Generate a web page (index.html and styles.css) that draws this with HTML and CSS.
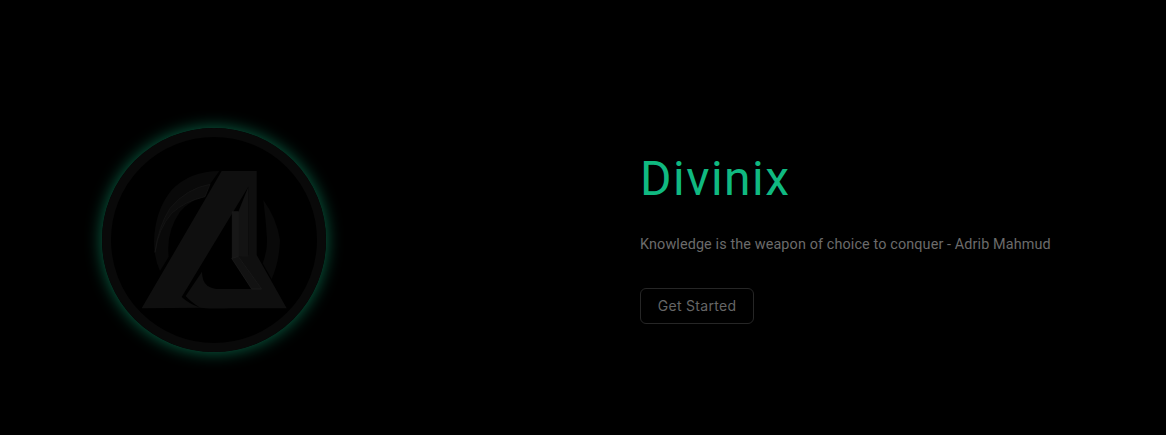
FILE: index.html
```html
<!DOCTYPE html>
<html lang="en">
<head>
    <meta charset="UTF-8">
    <meta name="viewport" content="width=device-width, initial-scale=1.0">
    <title>Divinix</title>
    <link rel="stylesheet" href="styles.css">
</head>
<body>
    <section class="hero">
        <div class="hero-logo">
            <div class="logo-ring">
                <svg class="logo-mark" viewBox="63 66 618 618" aria-hidden="true">
                    <!-- swooshes behind the A -->
                    <path fill="#090909" d="M388 168 Q300 168 245 225 Q195 285 192 380 Q192 430 210 468 L236 425 Q228 350 270 290 Q295 262 330 250 L388 168 Z"/>
                    <path fill="#0d0d0d" stroke="#171717" stroke-width="2" d="M360 208 Q290 220 240 280 Q205 335 195 412 Q205 340 245 295 Q285 258 345 245 Z"/>
                    <path fill="#090909" d="M520 255 Q560 310 570 375 Q568 440 545 492 L518 445 Q535 400 530 360 Q528 320 520 255 Z"/>
                    <!-- A body -->
                    <path fill="#0f0f0f" d="M155 580 L395 168 H500 V420 L590 580 H420 Q370 582 330 578 Z"/>
                    <path fill="#000" d="M475 215 L275 546 Q296 566 330 578 Q302 560 287 543 L336 470 Q336 500 352 512 Q368 522 388 522 H515 L445 425 L475 420 Z"/>
                    <!-- facets -->
                    <path fill="#131313" d="M475 215 V425 L445 425 V290 Z"/>
                    <path fill="#171717" stroke="#1e1e1e" stroke-width="2" d="M427 290 H445 V425 L427 430 Z"/>
                    <path fill="#121212" stroke="#1e1e1e" stroke-width="2" d="M425 430 L445 425 L515 522 H485 Z"/>
                </svg>
            </div>
        </div>
        <div class="hero-text">
            <h1>Divinix</h1>
            <p>Knowledge is the weapon of choice to conquer - Adrib Mahmud</p>
            <button class="start-btn">Get Started</button>
        </div>
    </section>
</body>
</html>
```

FILE: styles.css
```css
body {
    margin: 0;
    background-color: #000;
    font-family: "Roboto", "Liberation Sans", sans-serif;
}
.hero {
    display: grid;
    grid-template-columns: 640px 1fr;
    align-items: start;
    height: 435px;
    box-sizing: border-box;
    padding-top: 128px;
}
.hero-logo {
    padding-left: 102px;
}
.logo-ring {
    width: 224px;
    height: 224px;
    box-sizing: border-box;
    border: 9px solid #090909;
    border-radius: 50%;
    box-shadow: 0 0 16px 1px rgba(16, 185, 129, 0.5);
}
.logo-mark {
    display: block;
    width: 206px;
    height: 206px;
}
.hero-text {
    padding-top: 22px;
}
.hero-text h1 {
    margin: 0 0 25px;
    color: #10b981;
    font-size: 48px;
    font-weight: 400;
    letter-spacing: 1.5px;
    line-height: 58px;
}
.hero-text p {
    margin: 0 0 31px;
    color: #6b6b6b;
    font-size: 14.4px;
    letter-spacing: 0.12px;
    line-height: 24px;
}
.start-btn {
    display: block;
    width: 114px;
    height: 36px;
    padding: 0 0 2px;
    background: none;
    border: 1px solid #262626;
    border-radius: 6px;
    color: #666;
    font-family: "Inter", sans-serif;
    font-size: 14px;
    letter-spacing: 0.3px;
}
```
